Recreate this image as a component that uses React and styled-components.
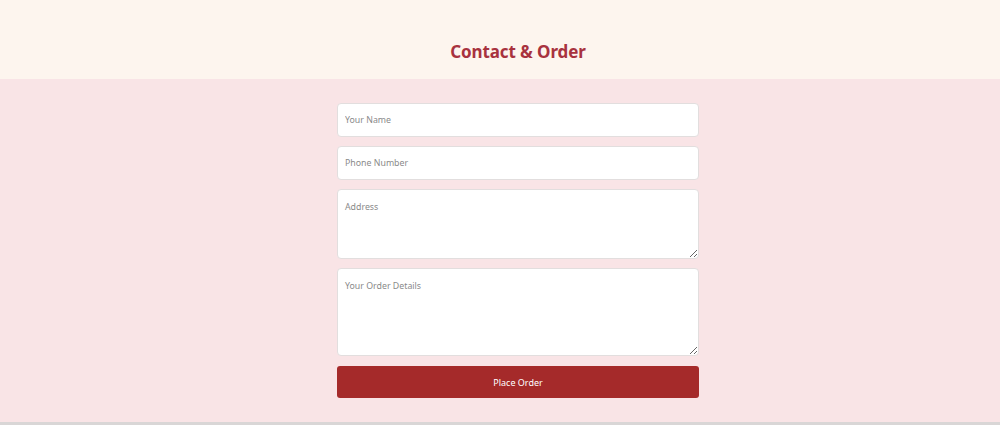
import React from "react";
import styled, { createGlobalStyle } from "styled-components";

const Global = createGlobalStyle`
  html, body { margin: 0; padding: 0; }
  body { font-family: "Noto Sans", "Open Sans", sans-serif; background: #f9e4e6; }
`;

const Page = styled.div`
  width: 1000px;
  height: 425px;
  display: flex;
  flex-direction: column;
  overflow: hidden;
  box-sizing: border-box;
  border-bottom: 3px solid #d9d6d6;
`;

const Header = styled.header`
  height: 79px;
  background: #fdf5ee;
  display: flex;
  align-items: flex-end;
  justify-content: center;
  padding: 0 0 16px 36px;
  box-sizing: border-box;
`;

const Title = styled.h1`
  margin: 0;
  font-size: 17px;
  font-weight: 700;
  color: #a8323e;
  letter-spacing: -0.1px;
`;

const Main = styled.main`
  flex: 1;
  background: #f9e4e6;
  display: flex;
  justify-content: center;
  padding: 24px 0 0 36px;
`;

const Form = styled.form`
  width: 362px;
  display: flex;
  flex-direction: column;
  gap: 9px;
`;

const fieldCss = `
  box-sizing: border-box;
  width: 100%;
  border: 1px solid #e2dede;
  border-radius: 4px;
  background: #fff;
  font-family: "Noto Sans", sans-serif;
  font-size: 8.8px;
  color: #333;
  padding: 0 7px;
  outline: none;
  &::placeholder { color: #8a8a8a; }
`;

const Input = styled.input`
  ${fieldCss}
  height: 34px;
`;

const TextArea = styled.textarea`
  ${fieldCss}
  height: ${(p) => p.$h}px;
  padding-top: 11px;
  resize: vertical;
  display: block;
`;

const Button = styled.button`
  margin-top: 1px;
  height: 32px;
  border: none;
  border-radius: 3px;
  background: #a52a2a;
  color: #fff;
  font-family: "Noto Sans", sans-serif;
  font-size: 9px;
  cursor: pointer;
`;

export default function App() {
  return (
    <>
      <Global />
      <Page>
        <Header>
          <Title>Contact &amp; Order</Title>
        </Header>
        <Main>
          <Form onSubmit={(e) => e.preventDefault()}>
            <Input placeholder="Your Name" />
            <Input placeholder="Phone Number" />
            <TextArea $h={70} placeholder="Address" />
            <TextArea $h={88} placeholder="Your Order Details" />
            <Button type="submit">Place Order</Button>
          </Form>
        </Main>
      </Page>
    </>
  );
}
